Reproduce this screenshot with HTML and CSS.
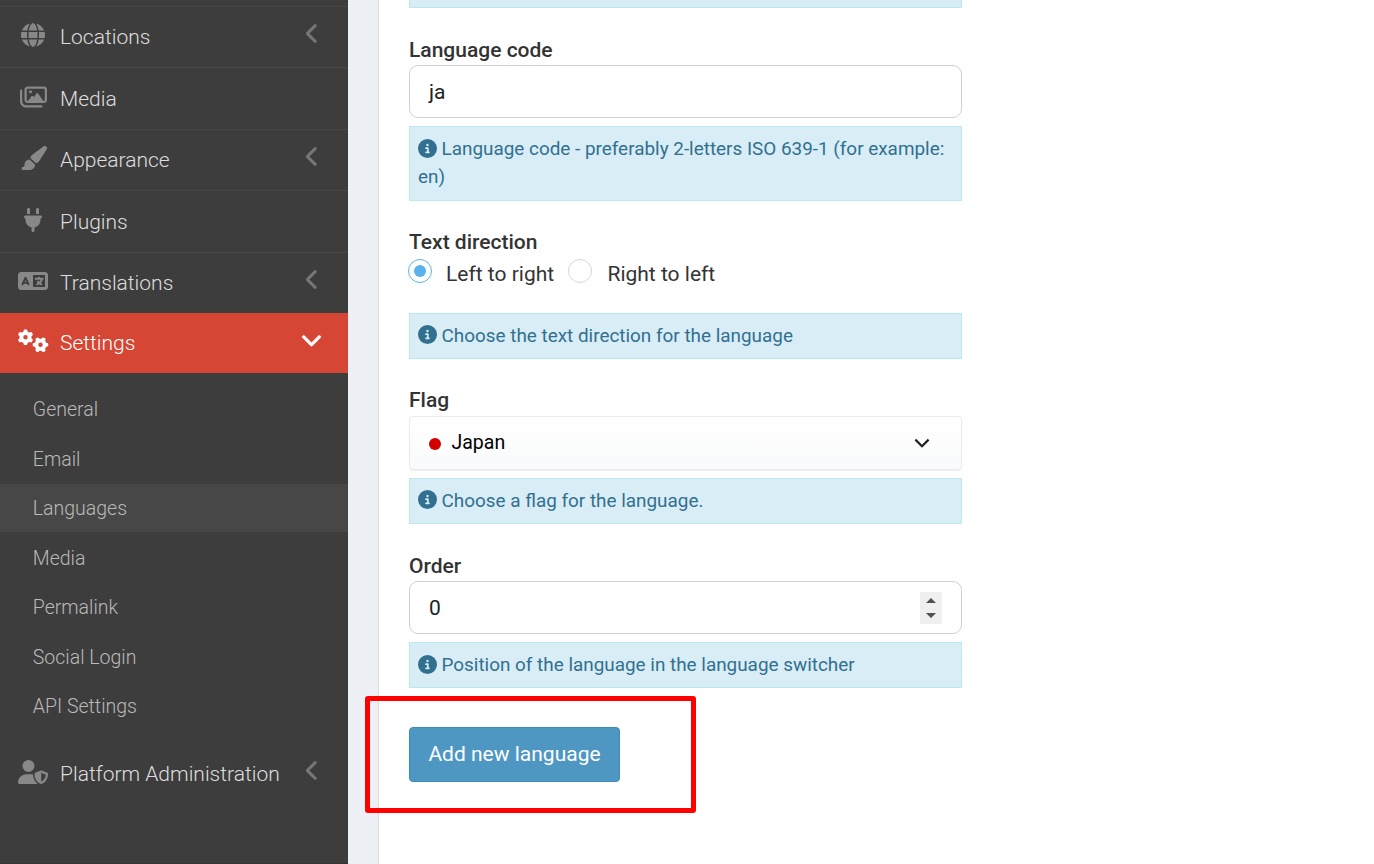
FILE: index.html
```html
<!DOCTYPE html>
<html lang="en">
<head>
<meta charset="utf-8">
<title>Languages</title>
<link rel="stylesheet" href="styles.css">
</head>
<body>
<svg class="defs" aria-hidden="true">
  <symbol id="left" viewBox="0 0 320 512"><path d="M9.4 233.4c-12.5 12.5-12.5 32.8 0 45.3l192 192c12.5 12.5 32.8 12.5 45.3 0s12.5-32.8 0-45.3L77.3 256 246.6 86.6c12.5-12.5 12.5-32.8 0-45.3s-32.8-12.5-45.3 0l-192 192z"/></symbol>
  <symbol id="info" viewBox="0 0 512 512"><path d="M256 512A256 256 0 1 0 256 0a256 256 0 1 0 0 512zM216 336h24V272H216c-13.3 0-24-10.7-24-24s10.7-24 24-24h48c13.3 0 24 10.7 24 24v88h8c13.3 0 24 10.7 24 24s-10.7 24-24 24H216c-13.3 0-24-10.7-24-24s10.7-24 24-24zm40-208a32 32 0 1 1 0 64 32 32 0 1 1 0-64z"/></symbol>
  <symbol id="gear" viewBox="0 0 320 352"><path d="M308.5 135.3c7.1-6.3 9.9-16.2 6.2-25c-2.3-5.3-4.8-10.5-7.6-15.5L304 89.4c-3-5-6.3-9.9-9.8-14.6c-5.7-7.6-15.7-10.1-24.7-7.1l-28.2 9.3c-10.7-8.8-23-16-36.2-20.9L199 27.1c-1.9-9.3-9.1-16.7-18.5-17.8C173.9 8.4 167.2 8 160.4 8h-.7c-6.8 0-13.5 .4-20.1 1.2c-9.4 1.1-16.6 8.6-18.5 17.8L115 56.1c-13.3 5-25.5 12.1-36.2 20.9L50.5 67.8c-9-3-19-.5-24.7 7.1c-3.5 4.7-6.8 9.6-9.9 14.6l-3 5.3c-2.8 5-5.3 10.2-7.6 15.6c-3.7 8.7-.9 18.6 6.2 25l22.2 19.8C32.6 161.9 32 168.9 32 176s.6 14.1 1.7 20.9L11.5 216.7c-7.1 6.3-9.9 16.2-6.2 25c2.3 5.3 4.8 10.5 7.6 15.6l3 5.2c3 5.1 6.3 9.9 9.9 14.6c5.7 7.6 15.7 10.1 24.7 7.1l28.2-9.3c10.7 8.8 23 16 36.2 20.9l6.1 29.1c1.9 9.3 9.1 16.7 18.5 17.8c6.7 .8 13.5 1.2 20.4 1.2s13.7-.4 20.4-1.2c9.4-1.1 16.6-8.6 18.5-17.8l6.1-29.1c13.3-5 25.5-12.1 36.2-20.9l28.2 9.3c9 3 19 .5 24.7-7.1c3.5-4.7 6.8-9.5 9.8-14.6l3.1-5.4c2.8-5 5.3-10.2 7.6-15.5c3.7-8.7 .9-18.6-6.2-25l-22.2-19.8c1.1-6.8 1.7-13.8 1.7-20.9s-.6-14.1-1.7-20.9l22.2-19.8zM112 176a48 48 0 1 1 96 0 48 48 0 1 1 -96 0z"/></symbol>
</svg>
<div class="app">
  <nav class="sidebar">
    <a class="item short"><svg class="icon w512" viewBox="0 0 512 512"><path d="M352 256c0 22.2-1.2 43.6-3.3 64H163.3c-2.2-20.4-3.3-41.8-3.3-64s1.2-43.6 3.3-64H348.7c2.2 20.4 3.3 41.8 3.3 64zm28.8-64H503.9c5.3 20.5 8.1 41.9 8.1 64s-2.8 43.5-8.1 64H380.8c2.1-20.6 3.2-42 3.2-64s-1.1-43.4-3.2-64zm112.6-32H376.7c-10-63.9-29.8-117.4-55.3-151.6c78.3 20.7 142 77.5 171.9 151.6zm-149.1 0H167.7c6.1-36.4 15.5-68.6 27-94.7c10.5-23.6 22.2-40.7 33.5-51.5C239.4 3.2 248.7 0 256 0s16.6 3.2 27.8 13.8c11.3 10.8 23 27.9 33.5 51.5c11.6 26 20.9 58.2 27 94.7zm-209 0H18.6C48.6 85.9 112.2 29.1 190.6 8.4C165.1 42.6 145.3 96.1 135.3 160zM8.1 192H131.2c-2.1 20.6-3.2 42-3.2 64s1.1 43.4 3.2 64H8.1C2.8 299.5 0 278.1 0 256s2.8-43.5 8.1-64zM194.7 446.6c-11.6-26-20.9-58.2-27-94.6H344.3c-6.1 36.4-15.5 68.6-27 94.6c-10.5 23.6-22.2 40.7-33.5 51.5C272.6 508.8 263.3 512 256 512s-16.6-3.2-27.8-13.8c-11.3-10.8-23-27.9-33.5-51.5zM135.3 352c10 63.9 29.8 117.4 55.3 151.6C112.2 482.9 48.6 426.1 18.6 352H135.3zm358.1 0c-30 74.1-93.6 130.9-171.9 151.6c25.5-34.2 45.2-87.7 55.3-151.6H493.4z"/></svg><span class="name">Locations</span><svg class="arrow"><use href="#left"/></svg></a>
    <a class="item"><svg class="icon w576" viewBox="0 0 576 512"><path d="M160 80H512c8.8 0 16 7.2 16 16V320c0 8.8-7.2 16-16 16H490.8L388.1 178.9c-4.4-6.8-12-10.9-20.1-10.9s-15.7 4.1-20.1 10.9l-52.2 79.8-12.4-16.9c-4.5-6.2-11.7-9.8-19.4-9.8s-14.8 3.6-19.4 9.8L175.6 336H160c-8.8 0-16-7.2-16-16V96c0-8.8 7.2-16 16-16zM96 96V320c0 35.3 28.7 64 64 64H512c35.3 0 64-28.7 64-64V96c0-35.3-28.7-64-64-64H160c-35.3 0-64 28.7-64 64zM48 120c0-13.3-10.7-24-24-24S0 106.7 0 120V344c0 75.1 60.9 136 136 136H456c13.3 0 24-10.7 24-24s-10.7-24-24-24H136c-48.6 0-88-39.4-88-88V120zm208 24a32 32 0 1 0 -64 0 32 32 0 1 0 64 0z"/></svg><span class="name">Media</span></a>
    <a class="item short"><svg class="icon w576" viewBox="0 0 576 512"><path d="M339.3 367.1c27.3-3.9 51.9-19.4 67.2-42.9L568.2 74.1c12.6-19.5 9.4-45.3-7.6-61.2S517.7-4.4 499.1 9.6L262.4 187.2c-24 18-38.2 46.1-38.4 76.1L339.3 367.1zm-19.6 25.4l-116-104.4C143.9 290.3 96 339.6 96 400c0 3.9 .2 7.8 .6 11.6C98.4 429.1 86.4 448 68.8 448H64c-17.7 0-32 14.3-32 32s14.3 32 32 32H208c61.9 0 112-50.1 112-112c0-2.5-.1-5-.2-7.5z"/></svg><span class="name">Appearance</span><svg class="arrow"><use href="#left"/></svg></a>
    <a class="item"><svg class="icon w384" viewBox="0 0 384 512"><path d="M96 0C78.3 0 64 14.3 64 32v96h64V32c0-17.7-14.3-32-32-32zM288 0c-17.7 0-32 14.3-32 32v96h64V32c0-17.7-14.3-32-32-32zM32 160c-17.7 0-32 14.3-32 32s14.3 32 32 32v32c0 77.4 55 142 128 156.8V480c0 17.7 14.3 32 32 32s32-14.3 32-32V412.8C297 398 352 333.4 352 256V224c17.7 0 32-14.3 32-32s-14.3-32-32-32H32z"/></svg><span class="name">Plugins</span></a>
    <a class="item short"><svg class="icon w640" viewBox="0 0 640 512"><path d="M0 128C0 92.7 28.7 64 64 64H256h48 16H576c35.3 0 64 28.7 64 64V384c0 35.3-28.7 64-64 64H320 304 256 64c-35.3 0-64-28.7-64-64V128zm320 0V384H576V128H320zM178.3 175.9c-3.2-7.2-10.4-11.9-18.3-11.9s-15.1 4.7-18.3 11.9l-64 144c-4.5 10.1 .1 21.9 10.2 26.4s21.9-.1 26.4-10.2l8.9-20.1h73.6l8.9 20.1c4.5 10.1 16.3 14.6 26.4 10.2s14.6-16.3 10.2-26.4l-64-144zM160 233.2L179 276H141l19-42.8zM448 164c11 0 20 9 20 20v4h44 16c11 0 20 9 20 20s-9 20-20 20h-2l-1.6 4.5c-8.9 24.4-22.4 46.6-39.6 65.4c.9 .6 1.8 1.1 2.7 1.6l18.9 11.3c9.5 5.7 12.5 18 6.9 27.4s-18 12.5-27.4 6.9l-18.9-11.3c-4.5-2.7-8.8-5.5-13.1-8.5c-10.6 7.5-21.9 14-34 19.4l-3.6 1.6c-10.1 4.5-21.9-.1-26.4-10.2s.1-21.9 10.2-26.4l3.6-1.6c6.4-2.9 12.6-6.1 18.5-9.8l-12.2-12.2c-7.8-7.8-7.8-20.5 0-28.3s20.5-7.8 28.3 0l14.6 14.6 .5 .5c12.4-13.1 22.5-28.3 29.8-45H448 376c-11 0-20-9-20-20s9-20 20-20h52v-4c0-11 9-20 20-20z"/></svg><span class="name">Translations</span><svg class="arrow"><use href="#left"/></svg></a>
    <a class="item active"><svg class="icon w640" viewBox="0 0 640 512"><use href="#gear" width="320" height="352"/><use href="#gear" width="320" height="352" transform="translate(480 336) rotate(90) translate(-160 -176)"/></svg><span class="name">Settings</span><svg class="arrow down" viewBox="0 0 512 512"><path d="M233.4 406.6c12.5 12.5 32.8 12.5 45.3 0l192-192c12.5-12.5 12.5-32.8 0-45.3s-32.8-12.5-45.3 0L256 338.7 86.6 169.4c-12.5-12.5-32.8-12.5-45.3 0s-12.5 32.8 0 45.3l192 192z"/></svg></a>
    <div class="submenu">
      <a class="sub">General</a>
      <a class="sub">Email</a>
      <a class="sub current">Languages</a>
      <a class="sub">Media</a>
      <a class="sub">Permalink</a>
      <a class="sub">Social Login</a>
      <a class="sub">API Settings</a>
    </div>
    <a class="item plain"><svg class="icon w640" viewBox="0 0 640 512"><path d="M224 256A128 128 0 1 0 224 0a128 128 0 1 0 0 256zm-45.7 48C79.8 304 0 383.8 0 482.3C0 498.7 13.3 512 29.7 512H418.3c1.8 0 3.5-.2 5.3-.5c-76.3-55.1-99.8-141-103.1-200.2c-16.1-4.8-33.1-7.3-50.7-7.3H178.3zm308.8-78.3l-120 48C358 277.4 352 286.2 352 296c0 63.3 25.9 168.8 134.8 214.2c5.9 2.5 12.6 2.5 18.5 0C614.1 464.8 640 359.3 640 296c0-9.8-6-18.6-15.1-22.3l-120-48c-5.7-2.3-12.1-2.3-17.8 0zM591.4 312c-3.9 50.7-27.2 116.7-95.4 149.7V273.8L591.4 312z"/></svg><span class="name">Platform Administration</span><svg class="arrow"><use href="#left"/></svg></a>
  </nav>
  <main class="panel">
    <div class="help cut"></div>
    <div class="group">
      <div class="label">Language code</div>
      <div class="field">ja</div>
      <div class="help"><svg class="info"><use href="#info"/></svg> Language code - preferably 2-letters ISO 639-1 (for example: en)</div>
    </div>
    <div class="group">
      <div class="label">Text direction</div>
      <div class="radios">
        <span class="radio on"></span><span class="choice">Left to right</span>
        <span class="radio"></span><span class="choice">Right to left</span>
      </div>
      <div class="help"><svg class="info"><use href="#info"/></svg> Choose the text direction for the language</div>
    </div>
    <div class="group">
      <div class="label">Flag</div>
      <div class="select"><span class="flag"></span><span class="country">Japan</span><svg class="caret" viewBox="0 0 16 10"><path d="M1.4 1.6L8 8.2l6.600-6.600"/></svg></div>
      <div class="help"><svg class="info"><use href="#info"/></svg> Choose a flag for the language.</div>
    </div>
    <div class="group">
      <div class="label">Order</div>
      <div class="field">0<svg class="spinner" viewBox="0 0 22 32"><path d="M6 11l5-5 5 5zM6 21l5 5 5-5z"/></svg></div>
      <div class="help"><svg class="info"><use href="#info"/></svg> Position of the language in the language switcher</div>
    </div>
    <button class="submit">Add new language</button>
  </main>
  <div class="highlight"></div>
</div>
</body>
</html>
```
FILE: styles.css
```css
* { box-sizing: border-box; }
body { margin: 0; font-family: Roboto, sans-serif; font-size: 21px; color: #333; background: #edf0f5; }
.defs { position: absolute; width: 0; height: 0; }
.app { display: flex; position: relative; width: 1374px; height: 864px; overflow: hidden; }

.sidebar { width: 348px; flex: none; padding-top: 6px; background: #3d3d3d; border-bottom: 1px solid #343434; }
.item { display: flex; align-items: center; height: 62px; padding: 0 29px 3px 18px; border-top: 1px solid #484848; color: #ddd; font-weight: 300; }
.item.short { height: 61px; }
.icon { height: 24px; fill: #888; overflow: visible; }
.short .icon { margin-bottom: 1.500px; }
.w384 { width: 18px; margin: 0 6px; }
.w512 { width: 24px; margin: 0 3px; }
.w576 { width: 27px; margin: 0 1.500px; }
.w640 { width: 30px; }
.name { flex: 1; margin-left: 12px; padding-top: 3px; line-height: 28px; }
.arrow { width: 13.100px; height: 21px; margin-bottom: 4px; fill: #777; stroke: #777; stroke-width: 14; overflow: visible; }
.active { height: 60px; border: 0; padding-right: 26px; padding-bottom: 4px; background: #d64635; color: #fff; }
.active .icon, .active .arrow { fill: #fff; }
.active .down { width: 21px; height: 21px; margin: 0 0 3px; stroke: #fff; stroke-width: 20; }
.submenu { display: flex; flex-direction: column; gap: 1.500px; padding-top: 12px; }
.sub { height: 48px; padding: 1px 0 0 32.800px; line-height: 48px; font-size: 19.500px; font-weight: 300; color: #b9b9b9; }
.sub.current { background: #474747; }
.plain { height: 62px; margin-top: 12.500px; border: 0; }

.panel { flex: 1; margin-left: 30px; padding-left: 30px; border-left: 1px solid #d8dade; background: #fff; }
.group { width: 553px; padding-top: 24px; }
.label { height: 33px; padding-top: 1.500px; line-height: 33px; font-weight: 500; }
.field { display: flex; align-items: center; justify-content: space-between; height: 53px; padding: 0 19px; border: 1px solid #cfd1d9; border-radius: 9px; color: #222; }
.help { width: 553px; margin-top: 8px; padding: 8px; border: 1px solid #bce8f1; background: #d9edf7; color: #31708f; font-size: 18.900px; line-height: 28.250px; }
.help.cut { height: 8px; margin: 0; padding: 0; border-top: 0; }
.info { width: 19px; height: 19px; margin-right: -.200px; fill: #31708f; vertical-align: -2.500px; }
.radios { display: flex; align-items: center; height: 47px; padding-bottom: 20px; margin-left: -1px; }
.radio { width: 24px; height: 24px; margin-right: 14px; margin-bottom: 1px; border: 1px solid #cfdadd; border-radius: 50%; }
.radio.on { display: grid; place-items: center; border-color: #5ab1ef; }
.radio.on::after { content: ""; width: 12px; height: 12px; border-radius: 50%; background: #5ab1ef; }
.choice { margin-right: 13.800px; padding-top: 5.500px; }
.choice + .radio { margin-right: 15.500px; }
.select { display: flex; align-items: center; height: 54px; padding: 0 31px 0 13px; border: 1px solid #e8ebf0; border-radius: 4px; background: linear-gradient(#fff, #f9fafb); box-shadow: 0 1px 1px rgba(22, 29, 37, .08); color: #000; }
.flag { display: grid; place-items: center; width: 24px; height: 18px; margin-top: 3px; background: #fff; }
.flag::after { content: ""; width: 12px; height: 12px; border-radius: 50%; background: #d30000; }
.country { flex: 1; margin-left: 4.500px; font-size: 19.500px; }
.caret { width: 16px; height: 10px; fill: none; stroke: #222; stroke-width: 2.200; }
.spinner { width: 22px; height: 32px; background: #efefef; fill: #505050; }
.submit { display: block; width: 211px; height: 55px; margin-top: 38.800px; padding: 0 0 1px; border: 1px solid #3a8cbd; border-radius: 4px; background: #4e97c2; color: #fff; font: 400 21px Roboto, sans-serif; }
.highlight { position: absolute; left: 365px; top: 696px; width: 331px; height: 117px; border: 5px solid #f00; border-radius: 3px; }
```
